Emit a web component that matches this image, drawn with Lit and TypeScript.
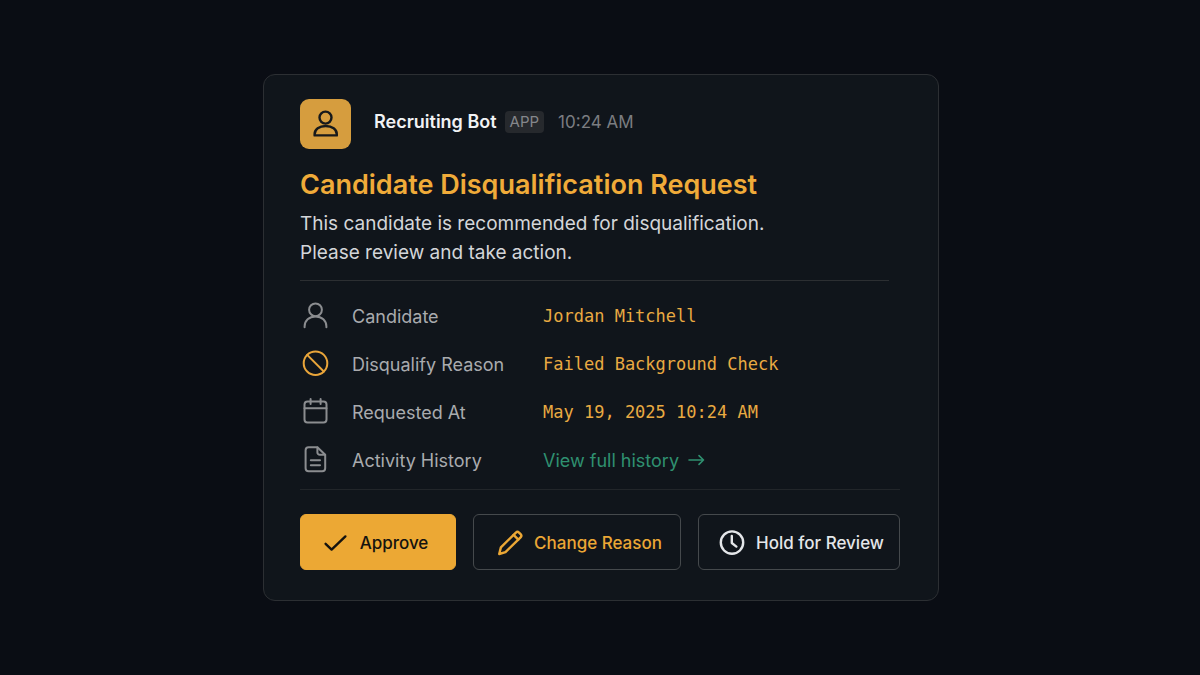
import { LitElement, html, css, svg } from "lit";
import { customElement } from "lit/decorators.js";

const icon = (cls: string, body: unknown, box = "0 0 28 28") =>
  html`<svg class=${cls} viewBox=${box} aria-hidden="true">${body}</svg>`;

const personSolid = svg`<circle cx="13.5" cy="7.6" r="6"/><path d="M2.6 25.4v-1.2c0-4.8 4.6-8.2 11.1-8.2s11.1 3.4 11.1 8.2v1.2z"/>`;
const person = svg`<circle cx="13.5" cy="7.8" r="6.4"/><path d="M2.6 25.2v-.8c0-5.6 4.5-10 10.9-10s10.9 4.4 10.9 10v.8"/>`;
const ban = svg`<circle cx="13.5" cy="13.2" r="11.8"/><path d="M5.2 4.9l16.6 16.6"/>`;
const calendar = svg`<rect x="2.5" y="3.4" width="22" height="21.2" rx="3"/><path d="M2.5 10.2h22M8.6 1v5M18.6 1v5"/>`;
const documentLines = svg`<path d="M15.4 1.2H6.6a3 3 0 0 0-3 3v18a3 3 0 0 0 3 3h13.6a3 3 0 0 0 3-3V8.8z"/><path d="M15.4 1.4v5a2.4 2.4 0 0 0 2.4 2.4h5.2M8.8 14.2h9.2M8.8 19.2h9.2"/>`;
const check = svg`<path d="M3.6 14.8l6 5.8L23.4 7.4"/>`;
const pencil = svg`<path d="M3.2 25l1.7-6.6L19.9 3.6a2.2 2.2 0 0 1 3.1 0l1.6 1.6a2.2 2.2 0 0 1 0 3.1L9.5 23.1z"/><path d="M17.6 5.9l4.7 4.7"/>`;
const clock = svg`<circle cx="14" cy="13.6" r="11.2"/><path d="M13.8 7v7l4.6 3.6"/>`;
const arrow = svg`<path d="M1 7h14.5M11 2.6L15.5 7 11 11.4"/>`;

@customElement("app-root")
export class AppRoot extends LitElement {
  static styles = css`
    :host {
      display: block;
      font-family: Inter, "Liberation Sans", sans-serif;
      color: #d4d6d9;
    }
    .page {
      box-sizing: border-box;
      min-height: 100vh;
      display: grid;
      place-items: center;
      padding: 24px 22px 24px 24px;
      background: #0a0d14;
    }
    .card {
      box-sizing: border-box;
      width: 100%;
      max-width: 676px;
      padding: 24px 38px 30px 36px;
      border: 1px solid #2c2f33;
      border-radius: 12px;
      background: #10151b;
    }
    svg {
      flex: none;
      fill: none;
      stroke: currentColor;
      stroke-width: 2;
      stroke-linecap: round;
      stroke-linejoin: round;
    }
    .head {
      display: flex;
      align-items: center;
      gap: 23px;
    }
    .avatar {
      display: grid;
      place-items: center;
      flex: none;
      width: 51px;
      height: 50px;
      border-radius: 9px;
      background: #d69d3e;
      color: #17191b;
    }
    .avatar-icon {
      width: 28px;
      height: 28px;
      stroke-width: 2.4;
    }
    .who {
      display: flex;
      flex-wrap: wrap;
      align-items: center;
      padding-bottom: 4px;
      line-height: 24px;
    }
    .name {
      font-size: 18px;
      font-weight: 600;
      color: #f1f2f4;
    }
    .tag {
      margin: 0 14px 0 8px;
      padding: 0 5px;
      border-radius: 4px;
      background: #26292d;
      color: #85878b;
      font-size: 15px;
      line-height: 22px;
    }
    .time {
      font-size: 17px;
      color: #7b7d81;
    }
    .title {
      margin: 18px 0 0;
      font-size: 27px;
      font-weight: 600;
      line-height: 36px;
      color: #f0ab39;
    }
    .lead {
      margin: 6px 0 0;
      font-size: 19px;
      line-height: 29px;
    }
    .rule {
      height: 1px;
      margin: 13px 11px 0 0;
      border: 0;
      background: #2c2f32;
    }
    .details {
      margin: 0;
      padding: 11px 0 5px;
      border-bottom: 1px solid #22262a;
    }
    .row {
      display: grid;
      grid-template-columns: 52px 191px 1fr;
      align-items: center;
      min-height: 48px;
    }
    .row-icon {
      width: 28px;
      height: 28px;
      margin-left: 2px;
      color: #8b8d90;
    }
    .amber {
      color: #e9a53a;
    }
    .label {
      font-size: 18px;
      color: #a9abae;
    }
    .value {
      margin: 0;
      font-family: "DejaVu Sans Mono", monospace;
      font-size: 17px;
      color: #e9aa42;
    }
    .link {
      display: inline-flex;
      align-items: center;
      gap: 9px;
      font-family: Inter, "Liberation Sans", sans-serif;
      font-size: 18px;
      color: #2f9070;
      text-decoration: none;
    }
    .arrow {
      width: 17px;
      height: 14px;
      stroke-width: 1.6;
    }
    .actions {
      display: grid;
      grid-template-columns: 156fr 208fr 202fr;
      gap: 17px;
      margin-top: 24px;
    }
    .btn {
      box-sizing: border-box;
      display: flex;
      align-items: center;
      justify-content: center;
      gap: 10px;
      height: 56px;
      padding: 2px 8px 0 12px;
      border: 1px solid #45494c;
      border-radius: 6px;
      background: transparent;
      color: #e4e6e9;
      font: 500 17px Inter, "Liberation Sans", sans-serif;
      white-space: nowrap;
      cursor: pointer;
    }
    .primary {
      padding: 2px 14px 0 8px;
      border-color: #eca834;
      background: #eca834;
      color: #15130f;
    }
    .change {
      color: #eba735;
    }
    .btn-icon {
      width: 28px;
      height: 28px;
      stroke-width: 2.4;
    }
    @media (max-width: 680px) {
      .actions {
        grid-template-columns: 1fr;
      }
      .row {
        grid-template-columns: 44px 1fr;
      }
      .value {
        grid-column: 2;
      }
    }
  `;

  render() {
    return html`
      <main class="page">
        <article class="card">
          <header class="head">
            <span class="avatar">${icon("avatar-icon", personSolid)}</span>
            <div class="who">
              <span class="name">Recruiting Bot</span>
              <span class="tag">APP</span>
              <time class="time">10:24 AM</time>
            </div>
          </header>
          <h1 class="title">Candidate Disqualification Request</h1>
          <p class="lead">
            This candidate is recommended for disqualification.<br />Please
            review and take action.
          </p>
          <hr class="rule" />
          <dl class="details">
            ${this.row(person, "Candidate", "Jordan Mitchell")}
            ${this.row(ban, "Disqualify Reason", "Failed Background Check", "amber")}
            ${this.row(calendar, "Requested At", "May 19, 2025 10:24 AM")}
            ${this.row(
              documentLines,
              "Activity History",
              html`<a class="link" href="#history"
                >View full history ${icon("arrow", arrow, "0 0 17 14")}</a
              >`
            )}
          </dl>
          <div class="actions">
            <button class="btn primary" type="button">
              ${icon("btn-icon", check)}Approve
            </button>
            <button class="btn change" type="button">
              ${icon("btn-icon", pencil)}Change Reason
            </button>
            <button class="btn" type="button">
              ${icon("btn-icon", clock)}Hold for Review
            </button>
          </div>
        </article>
      </main>
    `;
  }

  private row(glyph: unknown, label: string, value: unknown, tone = "") {
    return html`<div class="row">
      ${icon(`row-icon ${tone}`, glyph)}
      <dt class="label">${label}</dt>
      <dd class="value">${value}</dd>
    </div>`;
  }
}
